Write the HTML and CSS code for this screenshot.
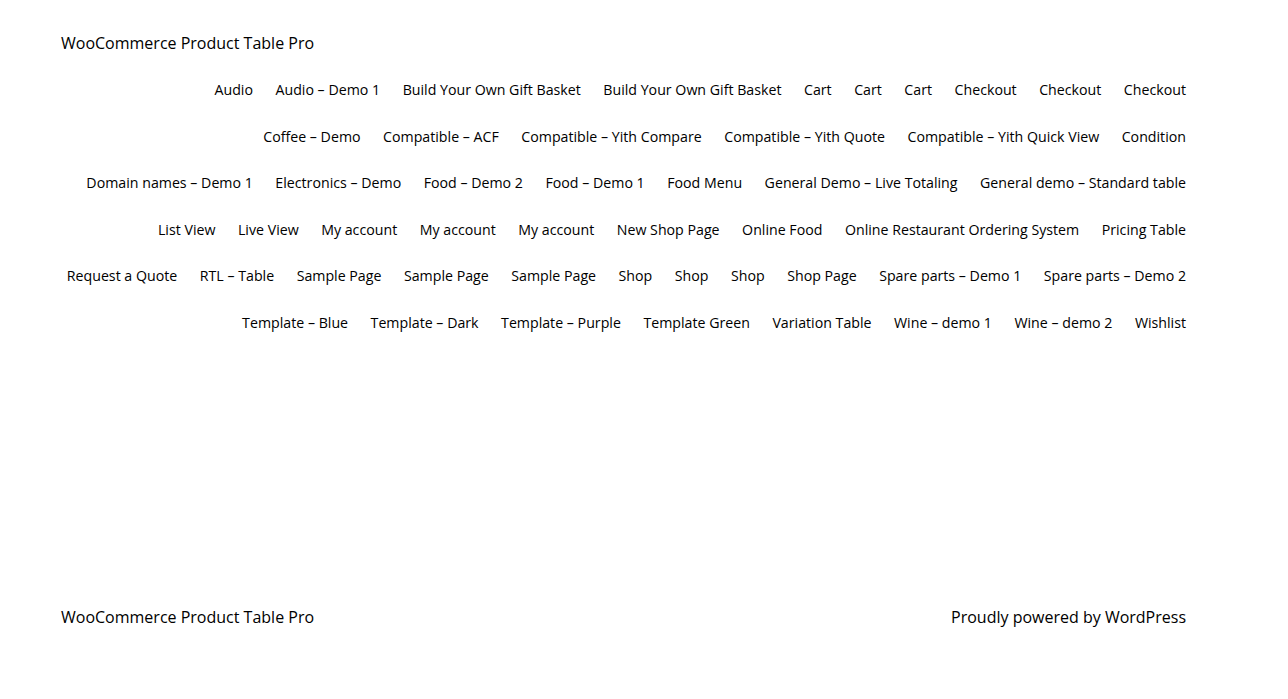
FILE: index.html
```html
<!DOCTYPE html>
<html lang="en">
<head>
    <meta charset="UTF-8">
    <meta name="viewport" content="width=device-width, initial-scale=1.0">
    <title>WooCommerce Product Table Pro</title>
    <link rel="stylesheet" href="styles.css">
</head>
<body>
    <header class="site-header">
        <p class="site-title"><a href="#">WooCommerce Product Table Pro</a></p>
        <nav class="page-nav">
            <ul class="nav-row">
                <li><a href="#">Audio</a></li>
                <li><a href="#">Audio – Demo 1</a></li>
                <li><a href="#">Build Your Own Gift Basket</a></li>
                <li><a href="#">Build Your Own Gift Basket</a></li>
                <li><a href="#">Cart</a></li>
                <li><a href="#">Cart</a></li>
                <li><a href="#">Cart</a></li>
                <li><a href="#">Checkout</a></li>
                <li><a href="#">Checkout</a></li>
                <li><a href="#">Checkout</a></li>
            </ul>
            <ul class="nav-row">
                <li><a href="#">Coffee – Demo</a></li>
                <li><a href="#">Compatible – ACF</a></li>
                <li><a href="#">Compatible – Yith Compare</a></li>
                <li><a href="#">Compatible – Yith Quote</a></li>
                <li><a href="#">Compatible – Yith Quick View</a></li>
                <li><a href="#">Condition</a></li>
            </ul>
            <ul class="nav-row">
                <li><a href="#">Domain names – Demo 1</a></li>
                <li><a href="#">Electronics – Demo</a></li>
                <li><a href="#">Food – Demo 2</a></li>
                <li><a href="#">Food – Demo 1</a></li>
                <li><a href="#">Food Menu</a></li>
                <li><a href="#">General Demo – Live Totaling</a></li>
                <li><a href="#">General demo – Standard table</a></li>
            </ul>
            <ul class="nav-row">
                <li><a href="#">List View</a></li>
                <li><a href="#">Live View</a></li>
                <li><a href="#">My account</a></li>
                <li><a href="#">My account</a></li>
                <li><a href="#">My account</a></li>
                <li><a href="#">New Shop Page</a></li>
                <li><a href="#">Online Food</a></li>
                <li><a href="#">Online Restaurant Ordering System</a></li>
                <li><a href="#">Pricing Table</a></li>
            </ul>
            <ul class="nav-row">
                <li><a href="#">Request a Quote</a></li>
                <li><a href="#">RTL – Table</a></li>
                <li><a href="#">Sample Page</a></li>
                <li><a href="#">Sample Page</a></li>
                <li><a href="#">Sample Page</a></li>
                <li><a href="#">Shop</a></li>
                <li><a href="#">Shop</a></li>
                <li><a href="#">Shop</a></li>
                <li><a href="#">Shop Page</a></li>
                <li><a href="#">Spare parts – Demo 1</a></li>
                <li><a href="#">Spare parts – Demo 2</a></li>
            </ul>
            <ul class="nav-row">
                <li><a href="#">Template – Blue</a></li>
                <li><a href="#">Template – Dark</a></li>
                <li><a href="#">Template – Purple</a></li>
                <li><a href="#">Template Green</a></li>
                <li><a href="#">Variation Table</a></li>
                <li><a href="#">Wine – demo 1</a></li>
                <li><a href="#">Wine – demo 2</a></li>
                <li><a href="#">Wishlist</a></li>
            </ul>
        </nav>
    </header>

    <main class="site-content"></main>

    <footer class="site-footer">
        <p class="site-title"><a href="#">WooCommerce Product Table Pro</a></p>
        <p class="credit">Proudly powered by <a href="#">WordPress</a></p>
    </footer>
</body>
</html>
```

FILE: styles.css
```css
/* Global Styles */
body {
    font-family: 'Open Sans', 'Noto Sans', sans-serif;
    color: #000;
    background-color: #fff;
    margin: 0;
    padding: 0;
    min-height: 100vh;
    display: flex;
    flex-direction: column;
}

a {
    color: inherit;
    text-decoration: none;
}

p {
    margin: 0;
}

.site-header {
    padding: 30px 102px 0 61px;
}

.site-title {
    font-size: 16px;
    line-height: 26px;
}

.page-nav {
    margin-top: 22px;
    display: flex;
    flex-direction: column;
    gap: 22.6px;
}

.nav-row {
    list-style: none;
    margin: 0;
    padding: 0;
    display: flex;
    justify-content: flex-end;
    gap: 22.5px;
    font-size: 14.2px;
    line-height: 24px;
}

.site-content {
    flex: 1;
}

.site-footer {
    display: flex;
    justify-content: space-between;
    align-items: center;
    padding: 0 102px 69px 61px;
}

.credit {
    font-size: 16px;
    line-height: 26px;
}
```
